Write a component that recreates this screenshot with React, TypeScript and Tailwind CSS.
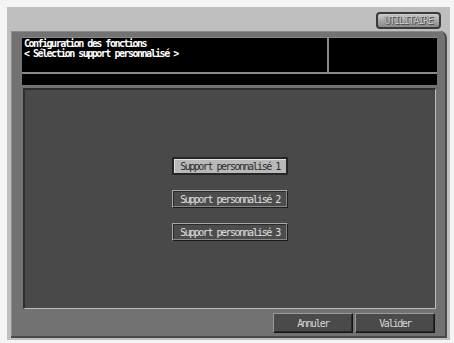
import React from "react";

const mono = { fontFamily: '"DejaVu Sans Mono", "Liberation Mono", monospace' };

function SelBtn({ label, active }: { label: string; active?: boolean }) {
  return active ? (
    <div
      className="w-[116px] h-[18px] flex items-center justify-center bg-[#b9b9b9] text-[#2a2a2a] text-[10px] tracking-[-1.5px] border-2 border-[#262626] shadow-[inset_1px_1px_0_#e0e0e0]"
      style={mono}
    >
      {label}
    </div>
  ) : (
    <div
      className="w-[116px] h-[18px] flex items-center justify-center bg-[#4c4c4c] text-[#e0e0e0] text-[10px] tracking-[-1.5px] border border-t-[#a8a8a8] border-l-[#a8a8a8] border-b-[#1c1c1c] border-r-[#1c1c1c] shadow-[inset_-1px_-1px_0_#8a8a8a,inset_1px_1px_0_#2a2a2a]"
      style={mono}
    >
      {label}
    </div>
  );
}

function BottomBtn({ label }: { label: string }) {
  return (
    <div
      className="w-[80px] h-[20px] flex items-center justify-center bg-[#4a4a4a] text-[#d8d8d8] text-[10px] tracking-[-1.5px] border border-t-[#9a9a9a] border-l-[#9a9a9a] border-b-[#151515] border-r-[#151515] shadow-[inset_-1px_-1px_0_#2a2a2a]"
      style={mono}
    >
      {label}
    </div>
  );
}

export default function App() {
  return (
    <div className="w-[454px] h-[343px] bg-[#f4f4f4] pt-[7px] pl-[7px] overflow-hidden">
      <div className="w-[443px] h-[333px] bg-[#bfbfbf] flex flex-col">
        <div className="h-[24px] flex items-start justify-end pr-[9px] pt-[5px]">
          <div className="w-[65px] h-[17px] rounded-[4px] border-2 border-[#3a3a3a] bg-gradient-to-b from-[#d0d0d0] via-[#a8a8a8] to-[#8a8a8a] flex items-center justify-center">
            <span
              className="text-[10px] tracking-[-1.2px] text-[#c8c8c8] [text-shadow:0_0_1px_#444,1px_1px_0_#555]"
              style={mono}
            >
              UTILITAIRE
            </span>
          </div>
        </div>
        <div className="ml-[4px] w-[436px] h-[307px] bg-[#727272] rounded-tr-[7px] border-r-2 border-b-2 border-[#4a4a4a] shadow-[inset_1px_1px_0_#8c8c8c] flex flex-col pt-[6px] pl-[11px]">
          <div className="w-[415px] h-[48px] bg-black border-t border-[#8a8a8a] flex flex-col">
            <div className="h-[34px] flex">
              <div
                className="w-[305px] pl-[2px] pt-[1px] text-white text-[10px] leading-[10px] tracking-[-1.5px] font-bold"
                style={mono}
              >
                <div>Configuration des fonctions</div>
                <div>&lt; Sélection support personnalisé &gt;</div>
              </div>
              <div className="w-[2px] bg-[#8a8a8a]" />
              <div className="flex-1" />
            </div>
            <div className="h-[2px] bg-[#8a8a8a]" />
            <div className="flex-1" />
          </div>
          <div className="mt-[3px] ml-[1px] w-[413px] h-[221px] bg-[#494949] border-t-2 border-l-2 border-[#2e2e2e] border-b border-r border-b-[#bdbdbd] border-r-[#bdbdbd] flex flex-col items-center justify-center gap-[15px]">
            <SelBtn label="Support personnalisé 1" active />
            <SelBtn label="Support personnalisé 2" />
            <SelBtn label="Support personnalisé 3" />
          </div>
          <div className="mt-[4px] w-[413px] flex justify-end gap-[2px]">
            <BottomBtn label="Annuler" />
            <BottomBtn label="Valider" />
          </div>
        </div>
      </div>
    </div>
  );
}
